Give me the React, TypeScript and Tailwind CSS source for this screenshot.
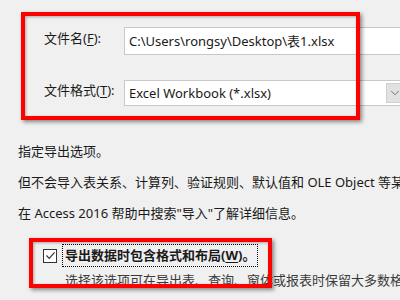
import { ChevronDown } from "lucide-react";

const font = {
  fontFamily: '"Noto Sans", "Noto Sans CJK SC", sans-serif',
};

function Hotkey({ k }: { k: string }) {
  return (
    <>
      (<span className="underline underline-offset-2">{k}</span>)
    </>
  );
}

export default function App() {
  return (
    <div
      className="relative w-[400px] h-[300px] overflow-hidden bg-[#f0f0f0] text-[13px] text-[#1a1a1a]"
      style={font}
    >
      <div className="pt-[27px] pl-[44px]">
        {/* file name */}
        <div className="flex items-start">
          <div className="w-[80px] shrink-0 pt-[1px] leading-[20px]">
            文件名<Hotkey k="F" />:
          </div>
          <div className="w-[300px] shrink-0 h-[28px] bg-white border border-[#c8c8c8] pl-[4px] leading-[26px] whitespace-nowrap">
            C:\Users\rongsy\Desktop\表1.xlsx
          </div>
        </div>

        {/* file format */}
        <div className="flex items-start mt-[25px]">
          <div className="w-[80px] shrink-0 leading-[20px]">
            文件格式<Hotkey k="T" />:
          </div>
          <div className="relative w-[282px] shrink-0 h-[26px] bg-white border border-[#c8c8c8] pl-[4px] leading-[24px] whitespace-nowrap">
            Excel Workbook (*.xlsx)
            <div className="absolute right-[2px] top-[2px] w-[17px] h-[20px] bg-[#e1e1e1] border border-[#d0d0d0] flex items-center justify-center">
              <ChevronDown size={14} strokeWidth={1.5} className="text-[#606060]" />
            </div>
          </div>
        </div>
      </div>

      {/* options text */}
      <div className="pl-[18px] mt-[35px] leading-[20px] whitespace-nowrap">
        <div>指定导出选项。</div>
        <div className="mt-[11px]">
          但不会导入表关系、计算列、验证规则、默认值和 OLE Object 等某些旧数据类型。
        </div>
        <div className="mt-[11px]">在 Access 2016 帮助中搜索"导入"了解详细信息。</div>
      </div>

      {/* checkbox */}
      <div className="pl-[43px] mt-[21px] whitespace-nowrap">
        <div className="flex items-center">
          <div className="w-[14px] h-[14px] shrink-0 border border-[#333] bg-white flex items-center justify-center">
            <svg width="11" height="11" viewBox="0 0 11 11">
              <path d="M1.5 5.5 L4.2 8.3 L9.6 2.4" fill="none" stroke="#333" strokeWidth="1.2" />
            </svg>
          </div>
          <div className="ml-[5px] px-[2px] border border-dotted border-black font-bold leading-[21px]">
            导出数据时包含格式和布局<Hotkey k="W" />。
          </div>
        </div>
        <div className="pl-[22px] mt-[3px] leading-[20px] text-[#3a3a3a]">
          选择该选项可在导出表、查询、窗体或报表时保留大多数格式信息。
        </div>
      </div>

      {/* annotation boxes */}
      <div className="absolute left-[21px] top-[12px] w-[339px] h-[108px] border-4 border-[#ff0000] shadow-[2px_2px_4px_rgba(0,0,0,0.45),inset_1px_1px_3px_rgba(0,0,0,0.3)]" />
      <div className="absolute left-[29px] top-[238px] w-[243px] h-[50px] border-4 border-[#ff0000] shadow-[2px_2px_4px_rgba(0,0,0,0.45),inset_1px_1px_3px_rgba(0,0,0,0.3)]" />
    </div>
  );
}
